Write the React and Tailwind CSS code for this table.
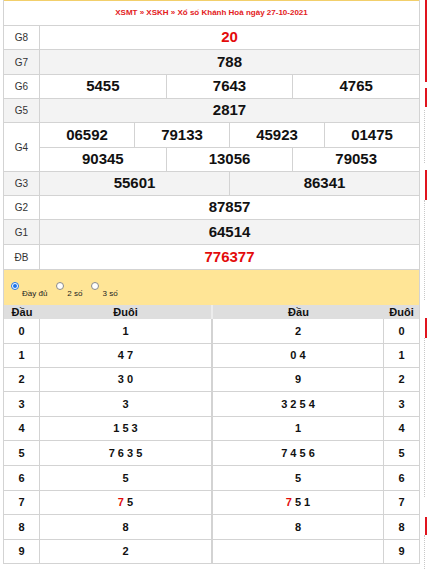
import React from "react";

const RED = "text-[#e30b0b]";

function Row({ label, h, gray, children }) {
  return (
    <div className={`flex border-b border-[#d3d3d3] ${h} ${gray ? "bg-[#f3f3f3]" : "bg-white"}`}>
      <div className="w-[36px] shrink-0 border-r border-[#d3d3d3] flex items-center justify-center text-[10px] text-[#333]">
        {label}
      </div>
      <div className="flex-1 flex">{children}</div>
    </div>
  );
}

function Cell({ children, last, red }) {
  return (
    <div
      className={`flex-1 flex items-center justify-center text-[15px] font-bold ${red ? RED : "text-[#111]"} ${last ? "" : "border-r border-[#d3d3d3]"}`}
    >
      {children}
    </div>
  );
}

function Cells({ values, red }) {
  return values.map((v, i) => (
    <Cell key={i} last={i === values.length - 1} red={red}>
      {v}
    </Cell>
  ));
}

const loto = [
  ["0", "1", "2", "0", 25],
  ["1", "4 7", "0 4", "1", 24],
  ["2", "3 0", "9", "2", 24],
  ["3", "3", "3 2 5 4", "3", 25],
  ["4", "1 5 3", "1", "4", 24],
  ["5", "7 6 3 5", "7 4 5 6", "5", 25],
  ["6", "5", "5", "6", 25],
  ["7", "R 5", "R 5 1", "7", 24],
  ["8", "8", "8", "8", 25],
  ["9", "2", "", "9", 24],
];

function Tail({ text }) {
  if (text.startsWith("R")) {
    return (
      <span className="whitespace-pre">
        <span className={RED}>7</span>
        {text.slice(1)}
      </span>
    );
  }
  return <span>{text}</span>;
}

function Radio({ checked, label }) {
  return (
    <div className="flex items-start">
      {checked ? (
        <span className="mt-[12px] w-[8px] h-[8px] rounded-full border border-[#1a73e8] bg-white flex items-center justify-center">
          <span className="w-[4px] h-[4px] rounded-full bg-[#1a73e8]" />
        </span>
      ) : (
        <span className="mt-[12px] w-[8px] h-[8px] rounded-full border border-[#8a8a8a] bg-white" />
      )}
      <span className="ml-[3px] mt-[19px] text-[8px] leading-[10px] text-[#222]">{label}</span>
    </div>
  );
}

function Strip() {
  const segs = [
    ["red", 82],
    ["", 6],
    ["red", 19],
    ["", 3],
    ["dot", 53],
    ["", 7],
    ["red", 30],
    ["dot", 100],
    ["", 18],
    ["red", 20],
    ["dot", 159],
    ["", 20],
    ["red", 18],
    ["dot", 34],
  ];
  return (
    <div className="w-[7px] shrink-0 flex flex-col">
      {segs.map(([t, h], i) => (
        <div key={i} style={{ height: h }} className="flex">
          {t === "red" && <div className="ml-[5px] w-[2px] h-full bg-[#e0141e]" />}
          {t === "dot" && <div className="ml-[4px] h-full border-l border-dotted border-[#c8c8c8]" />}
        </div>
      ))}
    </div>
  );
}

export default function App() {
  return (
    <div
      className="w-[427px] h-[569px] bg-white flex overflow-hidden"
      style={{ fontFamily: '"Liberation Sans", Arial, sans-serif' }}
    >
      <div className="w-[3px] shrink-0" />
      <div className="w-[417px] shrink-0 flex flex-col">
        <div className="border-l border-r border-[#d3d3d3]">
          <div className="h-[1px] bg-[#f2cf6b]" />
          <div className="h-[25px] border-b border-[#d3d3d3] flex items-center justify-center text-[8px] font-bold text-[#e3201b]">
            XSMT » XSKH » Xổ số Khánh Hoà ngày 27-10-2021
          </div>
          <Row label="G8" h="h-[24px]">
            <Cells values={["20"]} red />
          </Row>
          <Row label="G7" h="h-[25px]" gray>
            <Cells values={["788"]} />
          </Row>
          <Row label="G6" h="h-[24px]">
            <Cells values={["5455", "7643", "4765"]} />
          </Row>
          <Row label="G5" h="h-[24px]" gray>
            <Cells values={["2817"]} />
          </Row>
          <Row label="G4" h="h-[49px]">
            <div className="flex-1 flex flex-col">
              <div className="h-[25px] flex border-b border-[#d3d3d3]">
                <Cells values={["06592", "79133", "45923", "01475"]} />
              </div>
              <div className="flex-1 flex">
                <Cells values={["90345", "13056", "79053"]} />
              </div>
            </div>
          </Row>
          <Row label="G3" h="h-[24px]" gray>
            <Cells values={["55601", "86341"]} />
          </Row>
          <Row label="G2" h="h-[24px]">
            <Cells values={["87857"]} />
          </Row>
          <Row label="G1" h="h-[25px]" gray>
            <Cells values={["64514"]} />
          </Row>
          <Row label="ĐB" h="h-[25px]">
            <Cells values={["776377"]} red />
          </Row>
          <div className="h-[35px] bg-[#ffe596] flex pl-[7px] gap-[9px]">
            <Radio checked label="Đầy đủ" />
            <Radio label="2 số" />
            <Radio label="3 số" />
          </div>
          <div className="h-[14px] bg-[#dedede] flex text-[11px] font-bold text-[#111] leading-[14px]">
            <div className="w-[36px] text-center">Đầu</div>
            <div className="w-[173px] text-center border-r-2 border-[#ececec]">Đuôi</div>
            <div className="w-[171px] text-center">Đầu</div>
            <div className="w-[35px] text-center">Đuôi</div>
          </div>
          {loto.map(([a, b, c, d, h], i) => (
            <div
              key={i}
              style={{ height: h }}
              className="flex border-b border-[#d3d3d3] text-[11px] font-bold text-[#111]"
            >
              <div className="w-[36px] border-r border-[#d3d3d3] flex items-center justify-center">{a}</div>
              <div className="w-[173px] border-r-2 border-[#d3d3d3] flex items-center justify-center">
                <Tail text={b} />
              </div>
              <div className="w-[171px] border-r border-[#d3d3d3] flex items-center justify-center">
                <Tail text={c} />
              </div>
              <div className="w-[35px] flex items-center justify-center">{d}</div>
            </div>
          ))}
        </div>
      </div>
      <Strip />
    </div>
  );
}
